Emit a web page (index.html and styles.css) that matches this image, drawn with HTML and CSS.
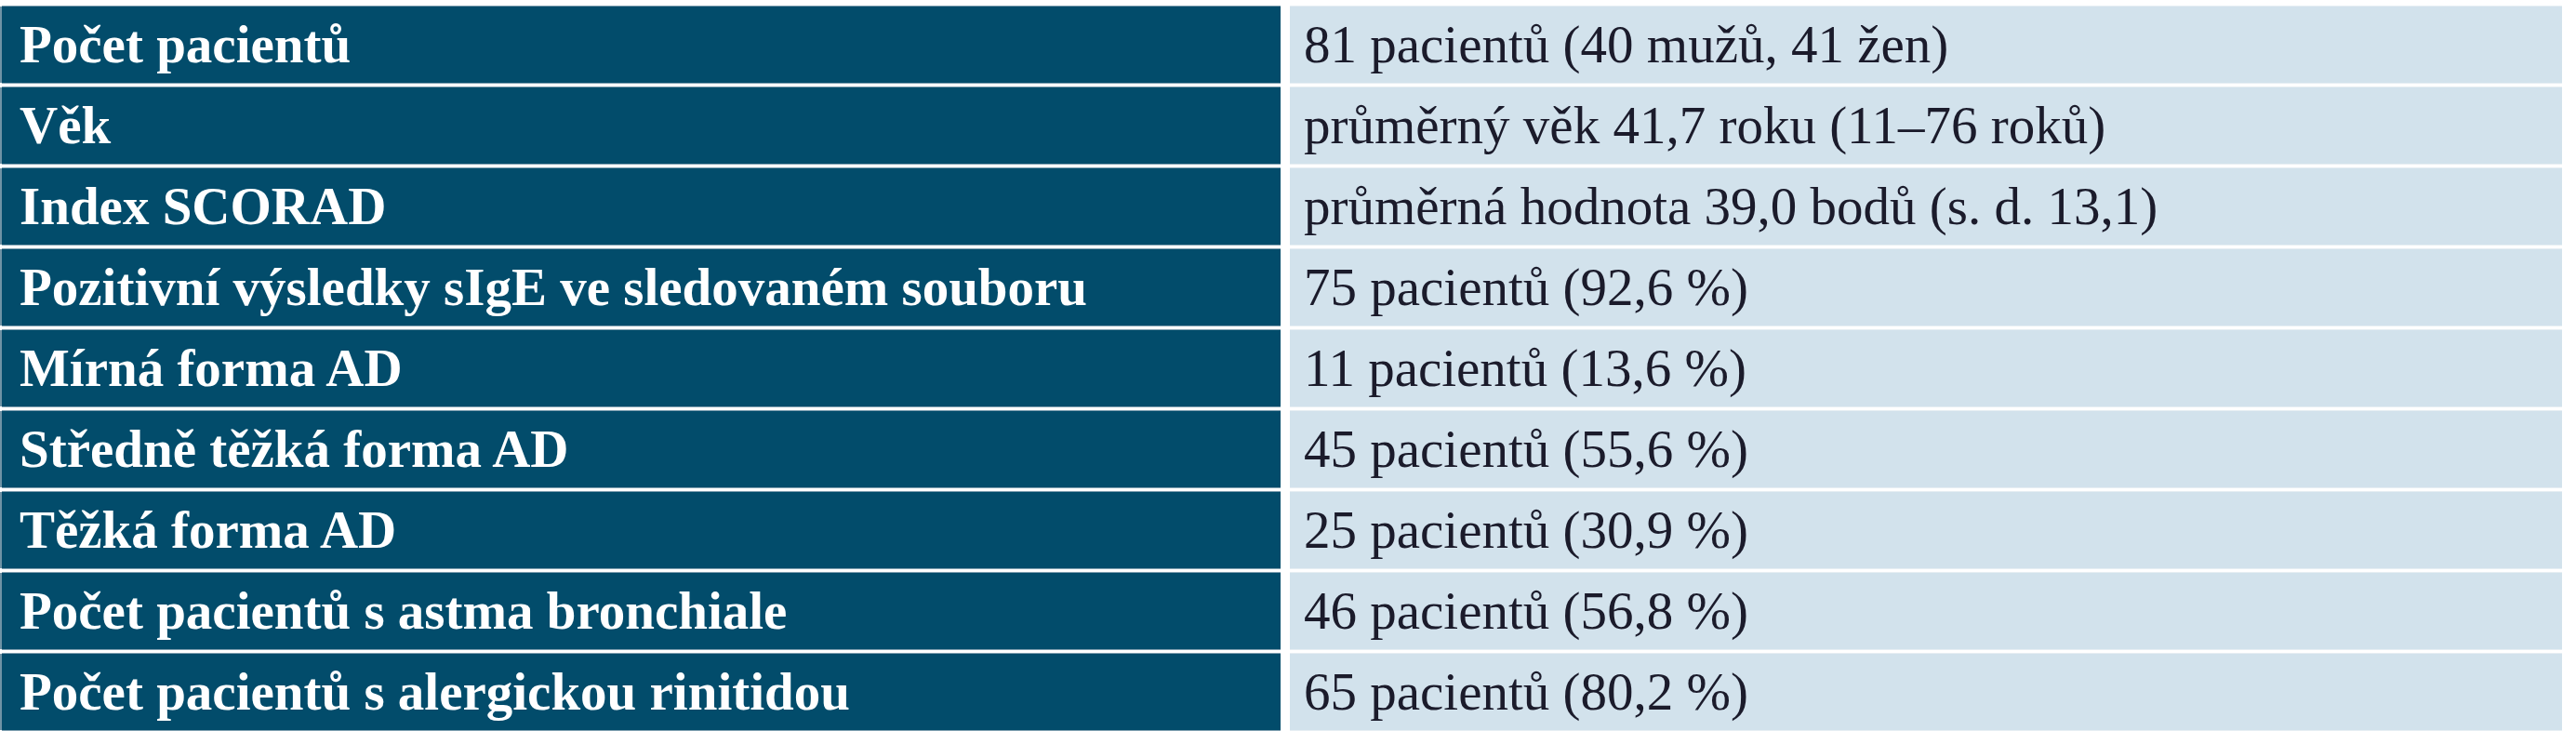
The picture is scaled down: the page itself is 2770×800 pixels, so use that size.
FILE: index.html
```html
<!DOCTYPE html>
<html lang="cs">
<head>
<meta charset="utf-8">
<title>Charakteristika souboru</title>
<link rel="stylesheet" href="styles.css">
</head>
<body>
<div class="table">
  <div class="label">Počet pacientů</div><div class="value">81 pacientů (40 mužů, 41 žen)</div>
  <div class="label">Věk</div><div class="value">průměrný věk 41,7 roku (11–76 roků)</div>
  <div class="label">Index SCORAD</div><div class="value">průměrná hodnota 39,0 bodů (s. d. 13,1)</div>
  <div class="label">Pozitivní výsledky sIgE ve sledovaném souboru</div><div class="value">75 pacientů (92,6 %)</div>
  <div class="label">Mírná forma AD</div><div class="value">11 pacientů (13,6 %)</div>
  <div class="label">Středně těžká forma AD</div><div class="value">45 pacientů (55,6 %)</div>
  <div class="label">Těžká forma AD</div><div class="value">25 pacientů (30,9 %)</div>
  <div class="label">Počet pacientů s astma bronchiale</div><div class="value">46 pacientů (56,8 %)</div>
  <div class="label">Počet pacientů s alergickou rinitidou</div><div class="value">65 pacientů (80,2 %)</div>
</div>
</body>
</html>
```
FILE: styles.css
```css
html, body {
  margin: 0;
  padding: 0;
  background: #ffffff;
}
body {
  width: 2770px;
  height: 800px;
  overflow: hidden;
}
.table {
  display: grid;
  grid-template-columns: 1375px 1368px;
  grid-auto-rows: 82px;
  column-gap: 10px;
  row-gap: 5px;
  padding: 7px 0 0 2px;
  font-family: "Liberation Serif", "Times New Roman", serif;
  font-size: 57px;
  line-height: 82px;
}
.label {
  background: #024c6b;
  color: #ffffff;
  font-weight: bold;
  padding-left: 19px;
  white-space: nowrap;
  box-shadow: -2px 0 0 #6f93a5, 0 -1px 0 #7f9fb0, 0 1px 0 #7f9fb0;
}
.value {
  background: #d2e2ec;
  color: #1b1b2b;
  padding-left: 15px;
  white-space: nowrap;
  box-shadow: 0 -1px 0 #e6eef3, 0 1px 0 #e6eef3;
}
```
